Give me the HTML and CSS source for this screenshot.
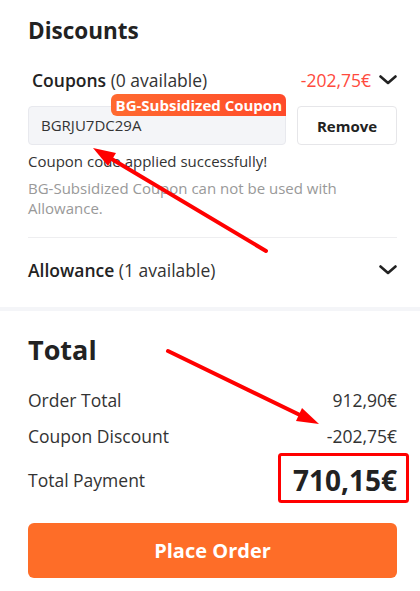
FILE: index.html
```html
<!DOCTYPE html>
<html lang="en">
<head>
<meta charset="utf-8">
<title>Checkout</title>
<link rel="stylesheet" href="styles.css">
</head>
<body>
<div class="page">
  <section class="discounts">
    <h2 class="title">Discounts</h2>
    <div class="row coupon-head">
      <span class="label"><span class="strong">Coupons</span> (0 available)</span>
      <span class="right">
        <span class="amount red">-202,75€</span>
        <svg class="chev" width="18" height="10" viewBox="0 0 18 10"><path d="M1.5 1.5 L9 8 L16.5 1.5" fill="none" stroke="#222" stroke-width="2.6" stroke-linecap="round" stroke-linejoin="round"/></svg>
      </span>
    </div>
    <div class="code-row">
      <div class="code-input">BGRJU7DC29A<span class="badge">BG-Subsidized Coupon</span></div>
      <button class="remove">Remove</button>
    </div>
    <p class="ok">Coupon code applied successfully!</p>
    <p class="note">BG-Subsidized Coupon can not be used with Allowance.</p>
    <div class="divider"></div>
    <div class="row allowance">
      <span class="label"><span class="strong">Allowance</span> (1 available)</span>
      <svg class="chev" width="18" height="10" viewBox="0 0 18 10"><path d="M1.5 1.5 L9 8 L16.5 1.5" fill="none" stroke="#222" stroke-width="2.6" stroke-linecap="round" stroke-linejoin="round"/></svg>
    </div>
  </section>
  <div class="band"></div>
  <section class="total">
    <h2 class="title big">Total</h2>
    <div class="row line"><span>Order Total</span><span>912,90€</span></div>
    <div class="row line"><span>Coupon Discount</span><span>-202,75€</span></div>
    <div class="row pay"><span>Total Payment</span><span class="pay-amount">710,15€</span></div>
    <button class="place">Place Order</button>
  </section>
</div>
<svg class="annot" width="420" height="591" viewBox="0 0 420 591">
  <line x1="266" y1="251" x2="110" y2="158" stroke="#f00" stroke-width="4" stroke-linecap="round"/>
  <polygon points="93,148 116,153 108,166" fill="#f00"/>
  <line x1="168" y1="351" x2="302" y2="416" stroke="#f00" stroke-width="4" stroke-linecap="round"/>
  <polygon points="319,424 296,421 302,408" fill="#f00"/>
  <rect x="279.5" y="454.5" width="128" height="47" rx="2" fill="none" stroke="#f00" stroke-width="3"/>
</svg>
</body>
</html>
```

FILE: styles.css
```css
* { box-sizing: border-box; }
html, body { margin: 0; padding: 0; background: #fff; }
body {
  font-family: "Open Sans", "Noto Sans", sans-serif;
  color: #222;
  width: 420px;
  height: 591px;
  overflow: hidden;
  position: relative;
}
.page { display: flex; flex-direction: column; }
.discounts { padding: 16px 23px 0 28px; }
.total { padding: 21px 23px 0 28px; }
.title {
  margin: 0;
  font-size: 22.5px;
  line-height: 30px;
  font-weight: 700;
  color: #222;
}
.title.big { font-size: 27px; line-height: 36px; }
.row {
  display: flex;
  justify-content: space-between;
  align-items: center;
}
.coupon-head { margin-top: 21px; padding-left: 4px; height: 26px; font-size: 17.5px; }
.label { color: #333; }
.strong { font-weight: 600; color: #222; }
.right { display: flex; align-items: center; gap: 8px; }
.red { color: #ff4a3d; }
.chev { display: block; }
.code-row {
  display: flex;
  gap: 11px;
  margin-top: 13px;
}
.code-input {
  position: relative;
  flex: 0 0 258px;
  height: 39px;
  background: #f4f5f8;
  border: 1px solid #e8e9ee;
  border-radius: 4px;
  padding-left: 12px;
  font-size: 15px;
  line-height: 37px;
  color: #333;
}
.badge {
  position: absolute;
  top: -13px;
  right: -1px;
  height: 22px;
  padding: 0 4px 0 5px;
  background: linear-gradient(90deg, #ff6a30, #ff4a2a);
  color: #fff;
  font-weight: 700;
  font-size: 15px;
  line-height: 22px;
  border-radius: 6px 6px 0 6px;
  white-space: nowrap;
}
.remove {
  flex: 1;
  height: 39px;
  background: #fff;
  border: 1px solid #e6e6e9;
  border-radius: 4px;
  font-family: inherit;
  font-size: 15px;
  font-weight: 700;
  color: #222;
  padding: 0;
}
.ok {
  margin: 6px 0 0;
  font-size: 15px;
  line-height: 20px;
  color: #333;
}
.note {
  margin: 7px 0 0;
  font-size: 15px;
  line-height: 20px;
  color: #999;
  max-width: 340px;
}
.divider { height: 1px; background: #eeeef0; margin-top: 19px; }
.allowance { height: 64px; font-size: 17.5px; }
.band { height: 4px; background: #f4f5f8; margin-top: 5px; }
.line { font-size: 17.5px; color: #333; height: 36px; }
.total .title + .line { margin-top: 14px; }
.pay { height: 52px; font-size: 17.5px; color: #333; }
.pay-amount { font-size: 28px; font-weight: 700; color: #222; }
.place {
  margin-top: 17px;
  width: 100%;
  height: 55px;
  background: #fe6d28;
  border: none;
  border-radius: 6px;
  color: #fff;
  font-family: inherit;
  font-size: 20px;
  font-weight: 700;
}
.annot { position: absolute; left: 0; top: 0; pointer-events: none; }
```
